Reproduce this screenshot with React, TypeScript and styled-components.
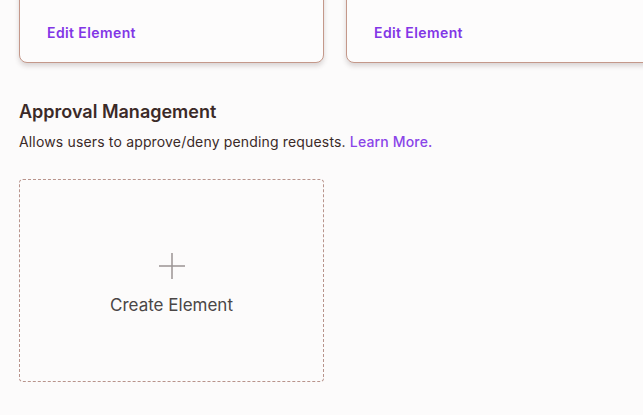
import React from 'react'
import styled, { createGlobalStyle } from 'styled-components'

const GlobalStyle = createGlobalStyle`
  html, body {
    margin: 0;
    padding: 0;
    background: #fcfbfb;
    font-family: Inter, "Noto Sans", sans-serif;
    overflow: hidden;
  }
`

const Page = styled.div`
  padding: 0 19px;
  margin-top: -37px;
`

const CardRow = styled.div`
  display: grid;
  grid-template-columns: 305px 305px;
  gap: 22px;
`

const Card = styled.div`
  height: 100px;
  box-sizing: border-box;
  display: flex;
  flex-direction: column;
  justify-content: flex-end;
  padding: 0 27px 19px;
  background: #fdfcfc;
  border: 1px solid #c4988a;
  border-radius: 8px;
  box-shadow: 0 3px 5px rgba(60, 40, 40, 0.18);
`

const EditLink = styled.a`
  font-size: 14px;
  line-height: 20px;
  font-weight: 600;
  color: #8236e6;
  letter-spacing: 0.4px;
  cursor: pointer;
`

const Section = styled.section`
  margin-top: 37px;
`

const Heading = styled.h2`
  margin: 0;
  font-size: 18px;
  line-height: 24px;
  font-weight: 600;
  color: #3b2a28;
`

const Description = styled.p`
  margin: 8px 0 0;
  font-size: 14px;
  line-height: 20px;
  color: #3b2a28;
  letter-spacing: 0.16px;

  a {
    color: #8a44e8;
    font-weight: 500;
    text-decoration: none;
  }
`

const CreateBox = styled.button`
  margin-top: 27px;
  width: 305px;
  height: 203px;
  box-sizing: border-box;
  display: flex;
  flex-direction: column;
  align-items: center;
  justify-content: center;
  gap: 14px;
  padding: 6px 0 0;
  background: transparent;
  border: 1px dashed #b8948c;
  border-radius: 4px;
  cursor: pointer;
  font-family: inherit;
`

const CreateLabel = styled.span`
  font-size: 17px;
  line-height: 22px;
  font-weight: 400;
  color: #4a4646;
  letter-spacing: 0;
`

const PlusIcon = () => (
  <svg width="28" height="28" viewBox="0 0 28 28" fill="none">
    <path d="M14 1v26M1 14h26" stroke="#9a9494" strokeWidth="1.5" />
  </svg>
)

export default function App() {
  return (
    <>
      <GlobalStyle />
      <Page>
        <CardRow>
          <Card>
            <EditLink>Edit Element</EditLink>
          </Card>
          <Card>
            <EditLink>Edit Element</EditLink>
          </Card>
        </CardRow>

        <Section>
          <Heading>Approval Management</Heading>
          <Description>
            Allows users to approve/deny pending requests. <a href="#">Learn More.</a>
          </Description>
          <CreateBox>
            <PlusIcon />
            <CreateLabel>Create Element</CreateLabel>
          </CreateBox>
        </Section>
      </Page>
    </>
  )
}
